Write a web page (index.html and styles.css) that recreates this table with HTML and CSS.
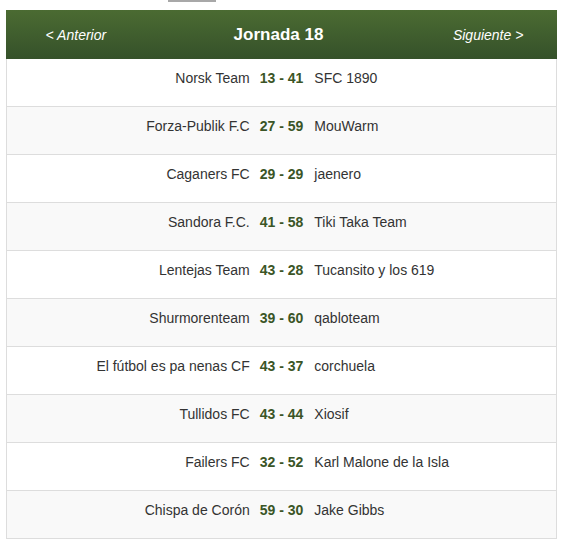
FILE: index.html
```html
<!DOCTYPE html>
<html lang="es">
<head>
<meta charset="utf-8">
<title>Jornada 18</title>
<link rel="stylesheet" href="styles.css">
</head>
<body>
<div class="topbar"><div class="stub"></div></div>
<div class="round">
  <div class="round-head">
    <a class="nav nav-prev" href="#">&lt; Anterior</a>
    <div class="title">Jornada 18</div>
    <a class="nav" href="#">Siguiente &gt;</a>
  </div>
  <div class="match"><span class="home">Norsk Team</span><span class="score">13 - 41</span><span class="away">SFC 1890</span></div>
  <div class="match"><span class="home">Forza-Publik F.C</span><span class="score">27 - 59</span><span class="away">MouWarm</span></div>
  <div class="match"><span class="home">Caganers FC</span><span class="score">29 - 29</span><span class="away">jaenero</span></div>
  <div class="match"><span class="home">Sandora F.C.</span><span class="score">41 - 58</span><span class="away">Tiki Taka Team</span></div>
  <div class="match"><span class="home">Lentejas Team</span><span class="score">43 - 28</span><span class="away">Tucansito y los 619</span></div>
  <div class="match"><span class="home">Shurmorenteam</span><span class="score">39 - 60</span><span class="away">qabloteam</span></div>
  <div class="match"><span class="home">El fútbol es pa nenas CF</span><span class="score">43 - 37</span><span class="away">corchuela</span></div>
  <div class="match"><span class="home">Tullidos FC</span><span class="score">43 - 44</span><span class="away">Xiosif</span></div>
  <div class="match"><span class="home">Failers FC</span><span class="score">32 - 52</span><span class="away">Karl Malone de la Isla</span></div>
  <div class="match"><span class="home">Chispa de Corón</span><span class="score">59 - 30</span><span class="away">Jake Gibbs</span></div>
</div>
</body>
</html>
```
FILE: styles.css
```css
html, body {
  margin: 0;
  padding: 0;
  background: #ffffff;
}
body {
  font-family: "Liberation Sans", Arial, sans-serif;
  font-size: 14px;
  color: #333333;
}
.topbar {
  height: 10px;
}
.stub {
  margin-left: 168px;
  width: 48px;
  height: 2px;
  background: #a8a8a8;
}
.round {
  margin: 0 5px 0 6px;
  width: 551px;
}
.round-head {
  display: grid;
  grid-template-columns: 1fr 2fr 1fr;
  align-items: center;
  height: 49px;
  background: linear-gradient(to bottom, #4b6b32 0%, #35512a 100%);
  color: #ffffff;
  text-align: center;
}
.nav {
  color: #ffffff;
  font-style: italic;
  font-size: 14px;
  text-decoration: none;
}
.nav-prev {
  padding-left: 2px;
}
.title {
  font-weight: bold;
  font-size: 17px;
  padding-right: 6px;
}
.match {
  display: grid;
  grid-template-columns: 1fr auto 1fr;
  column-gap: 10px;
  align-items: start;
  box-sizing: border-box;
  height: 48px;
  padding-top: 9px;
  line-height: 20px;
  border-left: 1px solid #dddddd;
  border-right: 1px solid #dddddd;
  border-bottom: 1px solid #dddddd;
  background: #ffffff;
}
.match:nth-of-type(odd) {
  background: #f9f9f9;
}
.home {
  text-align: right;
}
.away {
  text-align: left;
  padding-left: 1px;
}
.score {
  font-weight: bold;
  color: #3b5526;
}
```
